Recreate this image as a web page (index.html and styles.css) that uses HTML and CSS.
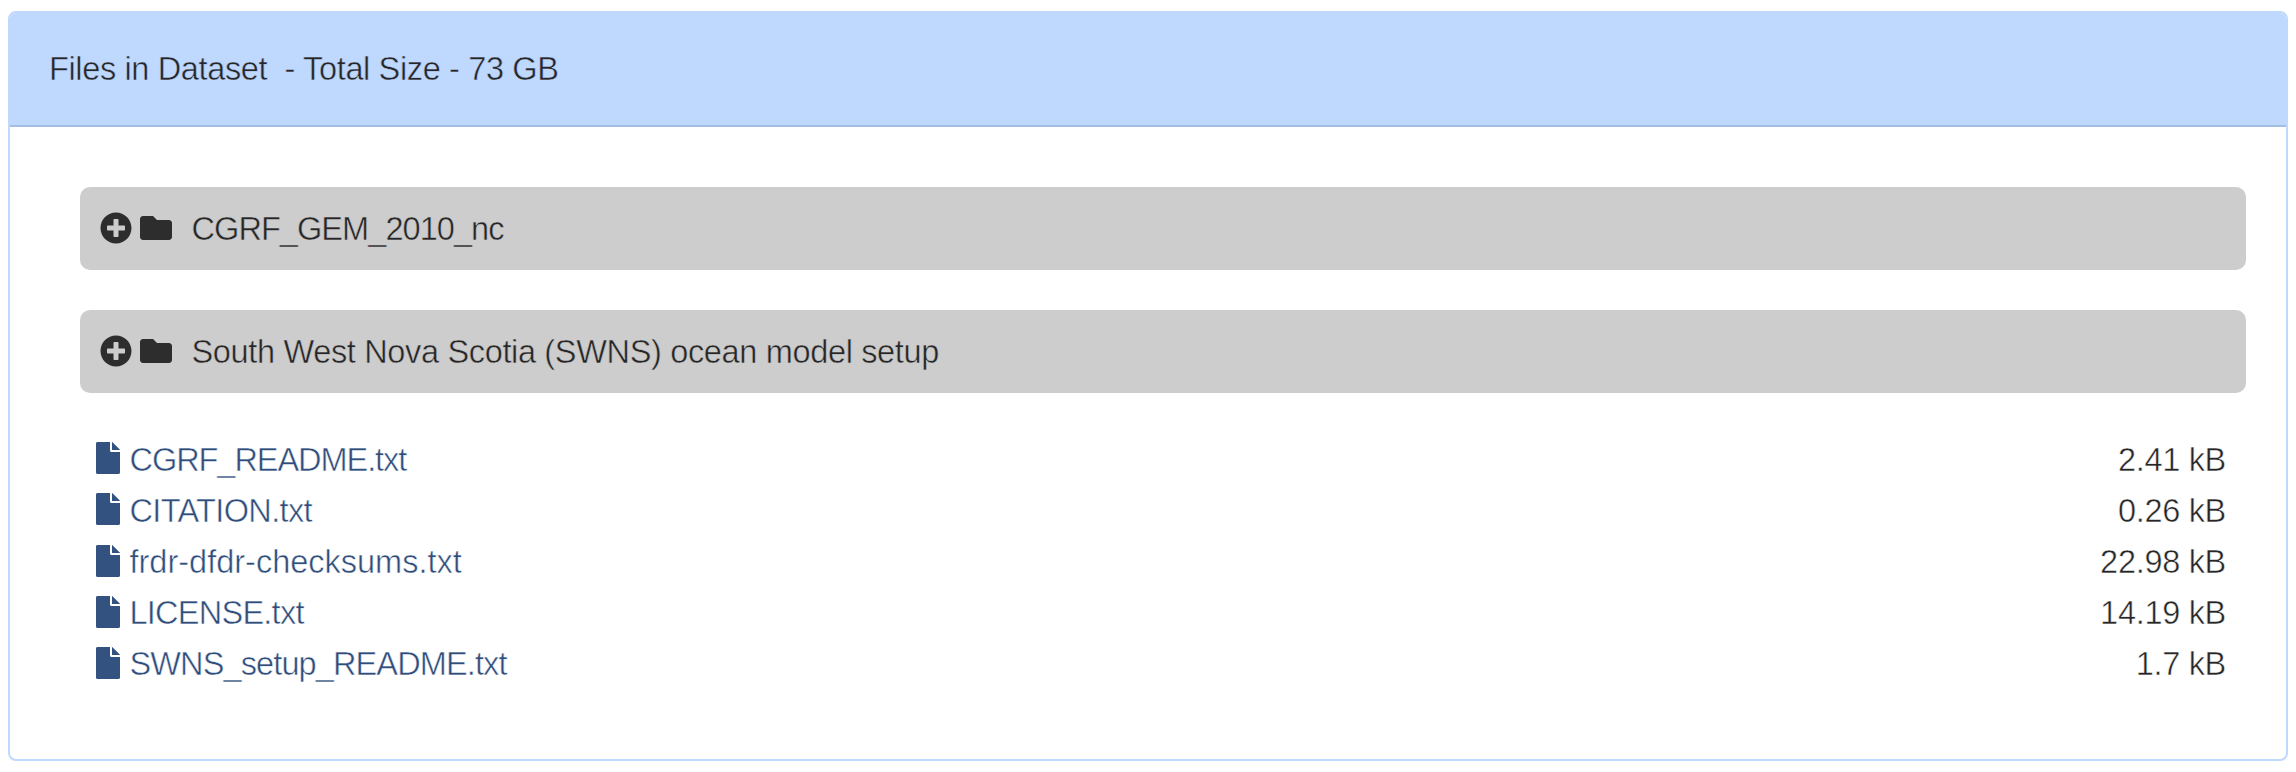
FILE: index.html
```html
<!DOCTYPE html>
<html lang="en">
<head>
<meta charset="utf-8">
<title>Files in Dataset</title>
<link rel="stylesheet" href="styles.css">
</head>
<body>
<svg class="symbols" aria-hidden="true">
  <symbol id="plus" viewBox="0 0 512 512"><path d="M256 8C119 8 8 119 8 256s111 248 248 248 248-111 248-248S393 8 256 8zm144 276c0 6.6-5.4 12-12 12h-92v92c0 6.600-5.400 12-12 12h-56c-6.600 0-12-5.400-12-12v-92h-92c-6.600 0-12-5.400-12-12v-56c0-6.600 5.400-12 12-12h92v-92c0-6.600 5.400-12 12-12h56c6.600 0 12 5.400 12 12v92h92c6.600 0 12 5.400 12 12v56z"/></symbol>
  <symbol id="folder" viewBox="0 0 512 512"><path d="M464 128H272l-64-64H48C21.490 64 0 85.490 0 112v288c0 26.510 21.490 48 48 48h416c26.510 0 48-21.490 48-48V176c0-26.510-21.490-48-48-48z"/></symbol>
  <symbol id="file" viewBox="0 0 384 512"><path d="M224 136V0H24C10.700 0 0 10.700 0 24v464c0 13.300 10.700 24 24 24h336c13.300 0 24-10.700 24-24V160H248c-13.200 0-24-10.800-24-24zm160-8H256V0h4l124 124z"/></symbol>
</svg>
<section class="panel">
  <header class="panel-heading"><span class="label heading-label">Files in Dataset&nbsp; - Total Size - 73 GB</span></header>
  <div class="panel-body">
    <div class="folder"><svg class="icon"><use href="#plus"/></svg><svg class="icon"><use href="#folder"/></svg><span class="label name-cgrf">CGRF_GEM_2010_nc</span></div>
    <div class="folder"><svg class="icon"><use href="#plus"/></svg><svg class="icon"><use href="#folder"/></svg><span class="label name-swns">South West Nova Scotia (SWNS) ocean model setup</span></div>
    <ul class="files">
      <li class="file"><a class="file-link"><svg class="file-icon"><use href="#file"/></svg><span class="label file-cgrf">CGRF_README.txt</span></a><span class="label size">2.41 kB</span></li>
      <li class="file"><a class="file-link"><svg class="file-icon"><use href="#file"/></svg><span class="label file-citation">CITATION.txt</span></a><span class="label size">0.26 kB</span></li>
      <li class="file"><a class="file-link"><svg class="file-icon"><use href="#file"/></svg><span class="label file-checksums">frdr-dfdr-checksums.txt</span></a><span class="label size">22.98 kB</span></li>
      <li class="file"><a class="file-link"><svg class="file-icon"><use href="#file"/></svg><span class="label file-license">LICENSE.txt</span></a><span class="label size">14.19 kB</span></li>
      <li class="file"><a class="file-link"><svg class="file-icon"><use href="#file"/></svg><span class="label file-setup">SWNS_setup_README.txt</span></a><span class="label size">1.7 kB</span></li>
    </ul>
  </div>
</section>
</body>
</html>
```
FILE: styles.css
```css
* { box-sizing: border-box; }
body {
  margin: 0;
  padding: 11px 8px;
  background: #fff;
  color: #262626;
  font: 32.5px/51.2px "Liberation Sans", Arial, sans-serif;
}
.symbols { display: none; }
.panel {
  height: 750px;
  border: 2px solid #bfd8fd;
  border-radius: 8px;
  overflow: hidden;
}
.panel-heading {
  --surface: #bfd8fd;
  height: 116px;
  padding: 30px 39px;
  background: #bfd8fd;
  border-bottom: 2px solid #a3bee2;
}
/* The outline takes the surface colour, which slims the letter strokes. */
.label {
  -webkit-text-stroke: 0.5px var(--surface, #fff);
  white-space: nowrap;
}
.heading-label { display: block; padding-top: 1px; letter-spacing: -0.36px; }
.name-cgrf { letter-spacing: -0.93px; }
.name-swns { letter-spacing: -0.34px; }
.file-cgrf { letter-spacing: -1.05px; }
.file-citation { letter-spacing: -0.65px; }
.file-license { letter-spacing: -0.75px; }
.file-setup { letter-spacing: -0.88px; }
.size { letter-spacing: -0.3px; }
.panel-heading { height: 114px; }
.panel-body { padding: 60px 40px 0 70px; }
.folder {
  --surface: #cdcdcd;
  display: flex;
  align-items: center;
  gap: 8px;
  height: 83px;
  margin-bottom: 40px;
  padding: 0 20px 1px;
  background: #cdcdcd;
  border-radius: 10px;
}
.icon { width: 32px; height: 32px; fill: #2d2d2d; }
.folder .label { margin-left: 11.5px; padding-top: 4px; }
.files { list-style: none; margin: 0; padding: 0.6px 20px 0 16px; }
.file { display: flex; justify-content: space-between; height: 51.2px; }
.file-link { display: flex; gap: 9.5px; color: #2f4d7b; }
.file-icon { width: 24px; height: 32px; margin-top: 8.6px; fill: #34527f; }
.file .label { padding-top: 1px; }
```
